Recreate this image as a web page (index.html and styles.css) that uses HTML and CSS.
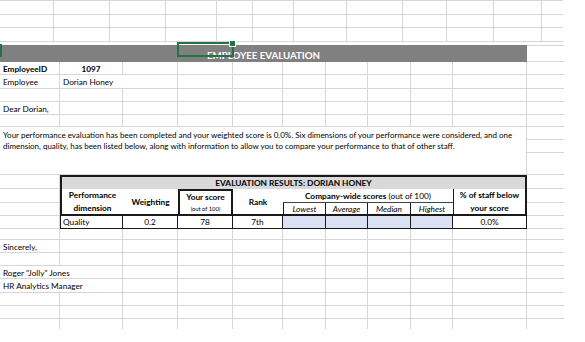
FILE: index.html
```html
<!DOCTYPE html>
<html lang="en">
<head>
  <meta charset="UTF-8" />
  <title>Employee Evaluation</title>
  <link rel="stylesheet" href="styles.css">
</head>
<body>

<div class="sheet">

  <!-- frozen top rows -->
  <div class="pane">
    <div></div><div></div><div></div><div></div><div></div><div></div><div></div><div></div><div></div><div></div><div></div><div></div>
    <div></div><div></div><div></div><div></div><div></div><div></div><div></div><div></div><div></div><div></div><div></div><div></div>
    <div></div><div></div><div></div><div></div><div></div><div></div><div></div><div></div><div></div><div></div><div></div><div></div>
  </div>

  <div class="banner">
    <div class="banner-title">EMPLOYEE EVALUATION</div>
    <div class="banner-end"></div>
    <div class="select-box"></div>
  </div>

  <div class="grid">
    <!-- row 1 -->
    <div class="cell b">EmployeeID</div><div class="cell b c">1097</div>
    <div class="cell"></div><div class="cell"></div><div class="cell"></div><div class="cell"></div><div class="cell"></div><div class="cell"></div><div class="cell"></div><div class="cell"></div><div class="cell"></div>
    <!-- row 2 -->
    <div class="cell">Employee</div><div class="cell span2">Dorian Honey</div>
    <div class="cell"></div><div class="cell"></div><div class="cell"></div><div class="cell"></div><div class="cell"></div><div class="cell"></div><div class="cell"></div><div class="cell"></div>
    <!-- row 3 -->
    <div class="cell"></div><div class="cell"></div><div class="cell"></div><div class="cell"></div><div class="cell"></div><div class="cell"></div><div class="cell"></div><div class="cell"></div><div class="cell"></div><div class="cell"></div><div class="cell"></div>
    <!-- row 4 -->
    <div class="cell">Dear Dorian,</div>
    <div class="cell"></div><div class="cell"></div><div class="cell"></div><div class="cell"></div><div class="cell"></div><div class="cell"></div><div class="cell"></div><div class="cell"></div><div class="cell"></div><div class="cell"></div>
    <!-- row 5 -->
    <div class="cell"></div><div class="cell"></div><div class="cell"></div><div class="cell"></div><div class="cell"></div><div class="cell"></div><div class="cell"></div><div class="cell"></div><div class="cell"></div><div class="cell"></div><div class="cell"></div>
    <!-- rows 6-8: letter text -->
    <div class="cell para">
      <span>Your performance evaluation has been completed and your weighted score is 0.0%. Six dimensions of your performance were considered, and one</span>
      <span>dimension, quality, has been listed below, along with information to allow you to compare your performance to that of other staff.</span>
    </div>
    <div class="cell"></div>
    <div class="cell"></div>
    <div class="cell"></div>
    <!-- rows 9-12: results table -->
    <div class="cell"></div>
    <div class="results">
      <div class="r-title">EVALUATION RESULTS: DORIAN HONEY</div>
      <div class="r-perf"><span>Performance</span><span>dimension</span></div>
      <div class="r-weight">Weighting</div>
      <div class="r-score"><span>Your score</span><small>(out of 100)</small></div>
      <div class="r-rank">Rank</div>
      <div class="r-company">Company-wide scores<span class="plain">&nbsp;(out of 100)</span></div>
      <div class="r-pct"><span>% of staff below</span><span>your score</span></div>
      <div class="r-sub first">Lowest</div>
      <div class="r-sub">Average</div>
      <div class="r-sub">Median</div>
      <div class="r-sub last">Highest</div>
      <div class="r-val left">Quality</div>
      <div class="r-val">0.2</div>
      <div class="r-val">78</div>
      <div class="r-val">7th</div>
      <div class="r-val blue"></div>
      <div class="r-val blue"></div>
      <div class="r-val blue"></div>
      <div class="r-val blue"></div>
      <div class="r-val">0.0%</div>
    </div>
    <div class="cell"></div>
    <div class="cell"></div><div class="cell"></div>
    <div class="cell"></div><div class="cell"></div>
    <div class="cell"></div><div class="cell"></div>
    <!-- row 13 -->
    <div class="cell"></div><div class="cell"></div><div class="cell"></div><div class="cell"></div><div class="cell"></div><div class="cell"></div><div class="cell"></div><div class="cell"></div><div class="cell"></div><div class="cell"></div><div class="cell"></div>
    <!-- row 14 -->
    <div class="cell">Sincerely,</div>
    <div class="cell"></div><div class="cell"></div><div class="cell"></div><div class="cell"></div><div class="cell"></div><div class="cell"></div><div class="cell"></div><div class="cell"></div><div class="cell"></div><div class="cell"></div>
    <!-- row 15 -->
    <div class="cell"></div><div class="cell"></div><div class="cell"></div><div class="cell"></div><div class="cell"></div><div class="cell"></div><div class="cell"></div><div class="cell"></div><div class="cell"></div><div class="cell"></div><div class="cell"></div>
    <!-- row 16 -->
    <div class="cell span2">Roger "Jolly" Jones</div>
    <div class="cell"></div><div class="cell"></div><div class="cell"></div><div class="cell"></div><div class="cell"></div><div class="cell"></div><div class="cell"></div><div class="cell"></div><div class="cell"></div>
    <!-- row 17 -->
    <div class="cell span2">HR Analytics Manager</div>
    <div class="cell"></div><div class="cell"></div><div class="cell"></div><div class="cell"></div><div class="cell"></div><div class="cell"></div><div class="cell"></div><div class="cell"></div><div class="cell"></div>
    <!-- rows 18-20 -->
    <div class="cell"></div><div class="cell"></div><div class="cell"></div><div class="cell"></div><div class="cell"></div><div class="cell"></div><div class="cell"></div><div class="cell"></div><div class="cell"></div><div class="cell"></div><div class="cell"></div>
    <div class="cell"></div><div class="cell"></div><div class="cell"></div><div class="cell"></div><div class="cell"></div><div class="cell"></div><div class="cell"></div><div class="cell"></div><div class="cell"></div><div class="cell"></div><div class="cell"></div>
    <div class="cell"></div><div class="cell"></div><div class="cell"></div><div class="cell"></div><div class="cell"></div><div class="cell"></div><div class="cell"></div><div class="cell"></div><div class="cell"></div><div class="cell"></div><div class="cell"></div>
  </div>

</div>

</body>
</html>
```

FILE: styles.css
```css
* { box-sizing: border-box; margin: 0; padding: 0; }

body {
  font-family: 'Lato', 'Open Sans', sans-serif;
  font-size: 8.2px;
  color: #000;
  background: #fff;
}

.sheet {
  width: 585px;
  height: 342px;
}

/* top pane */
.pane {
  display: grid;
  grid-template-columns: 54px 56px 56px 51px 36px 41px 53px 56px 44px 47px 48px 22px;
  grid-template-rows: 14px 13px 14px;
  width: 563px;
  overflow: hidden;
  border-top: 1px solid #d6d6d6;
}

.pane div {
  border-right: 1px solid #d6d6d6;
  border-bottom: 1px solid #d6d6d6;
}

/* title bar */
.banner {
  position: relative;
  display: flex;
  height: 17px;
  margin-top: 3px;
}

.banner::before {
  content: "";
  position: absolute;
  left: 0;
  top: -1px;
  width: 2px;
  height: 13px;
  background: #217346;
}

.banner-title {
  width: 527px;
  background: #808080;
  color: #fff;
  font-weight: 700;
  font-size: 9.7px;
  display: flex;
  justify-content: center;
  align-items: flex-end;
  padding-bottom: 1px;
}

.banner-end {
  width: 37px;
  border-top: 1px solid #d6d6d6;
  border-bottom: 1px solid #d6d6d6;
}

.select-box {
  position: absolute;
  left: 177px;
  top: -3px;
  width: 57px;
  height: 15px;
  border: 2px solid #217346;
}

.select-box::after {
  content: "";
  position: absolute;
  right: -4px;
  top: -4px;
  width: 5px;
  height: 5px;
  background: #217346;
  border: 1px solid #fff;
}

/* main sheet */
.grid {
  display: grid;
  grid-template-columns: 60px 63px 55px 55px 50px 43px 42px 43px 42px 74px 38px;
  grid-template-rows: 13px 14px 13px 13px 12px 13px 13px 22px 14px 14px 13px 13px 11px 13px 13px 13px 14px 13px 13px 11px;
  width: 564px;
  height: 267px;
  overflow: hidden;
}

.cell {
  border-right: 1px solid #d6d6d6;
  border-bottom: 1px solid #d6d6d6;
  padding: 1px 3px 0;
  display: flex;
  align-items: center;
  white-space: nowrap;
}

.cell.b { font-weight: 700; }
.cell.c { justify-content: center; }
.cell.span2 { grid-column: span 2; }

.cell.para {
  grid-column: span 10;
  grid-row: span 3;
  display: block;
  padding: 3px 3px 0;
  font-size: 8px;
  line-height: 10.5px;
}

.cell.para span { display: block; }

/* results table */
.results {
  grid-column: span 9;
  grid-row: span 4;
  display: grid;
  grid-template-columns: 63px 55px 55px 50px 43px 42px 43px 42px 74px;
  grid-template-rows: 14px 14px 13px 13px;
  font-size: 8.3px;
}

.results > div {
  display: flex;
  align-items: center;
  justify-content: center;
  white-space: nowrap;
}

.r-title {
  grid-column: 1 / -1;
  background: #d9d9d9;
  font-weight: 700;
  border: 2px solid #1a1a1a;
  border-bottom: none;
}

.r-perf, .r-weight, .r-score, .r-rank, .r-pct {
  grid-row: 2 / 4;
  font-weight: 700;
  border-bottom: 2px solid #1a1a1a;
}

.r-perf, .r-score, .r-pct {
  flex-direction: column;
  line-height: 13px;
}

.r-perf { border-left: 2px solid #1a1a1a; }

.r-score {
  border: 2px solid #1a1a1a;
  line-height: 12px;
}

.r-score small {
  font-size: 5.8px;
  font-weight: 400;
}

.r-company {
  grid-column: 5 / 9;
  font-weight: 700;
  border-bottom: 1px solid #444;
}

.r-company .plain { font-weight: 400; }

.r-pct {
  grid-column: 9;
  border-left: 1px solid #1a1a1a;
  border-right: 2px solid #1a1a1a;
}

.r-sub {
  font-style: italic;
  border-right: 1px solid #1a1a1a;
  border-bottom: 2px solid #1a1a1a;
}

.r-sub.first { border-left: 1px solid #1a1a1a; }
.r-sub.last { border-right: none; }

.r-val {
  border-right: 1px solid #1a1a1a;
  border-bottom: 1px solid #1a1a1a;
}

.r-val.left {
  justify-content: flex-start;
  padding-left: 2px;
  border-left: 1px solid #1a1a1a;
}

.r-val.blue { background: #d9e1f2; }
```
